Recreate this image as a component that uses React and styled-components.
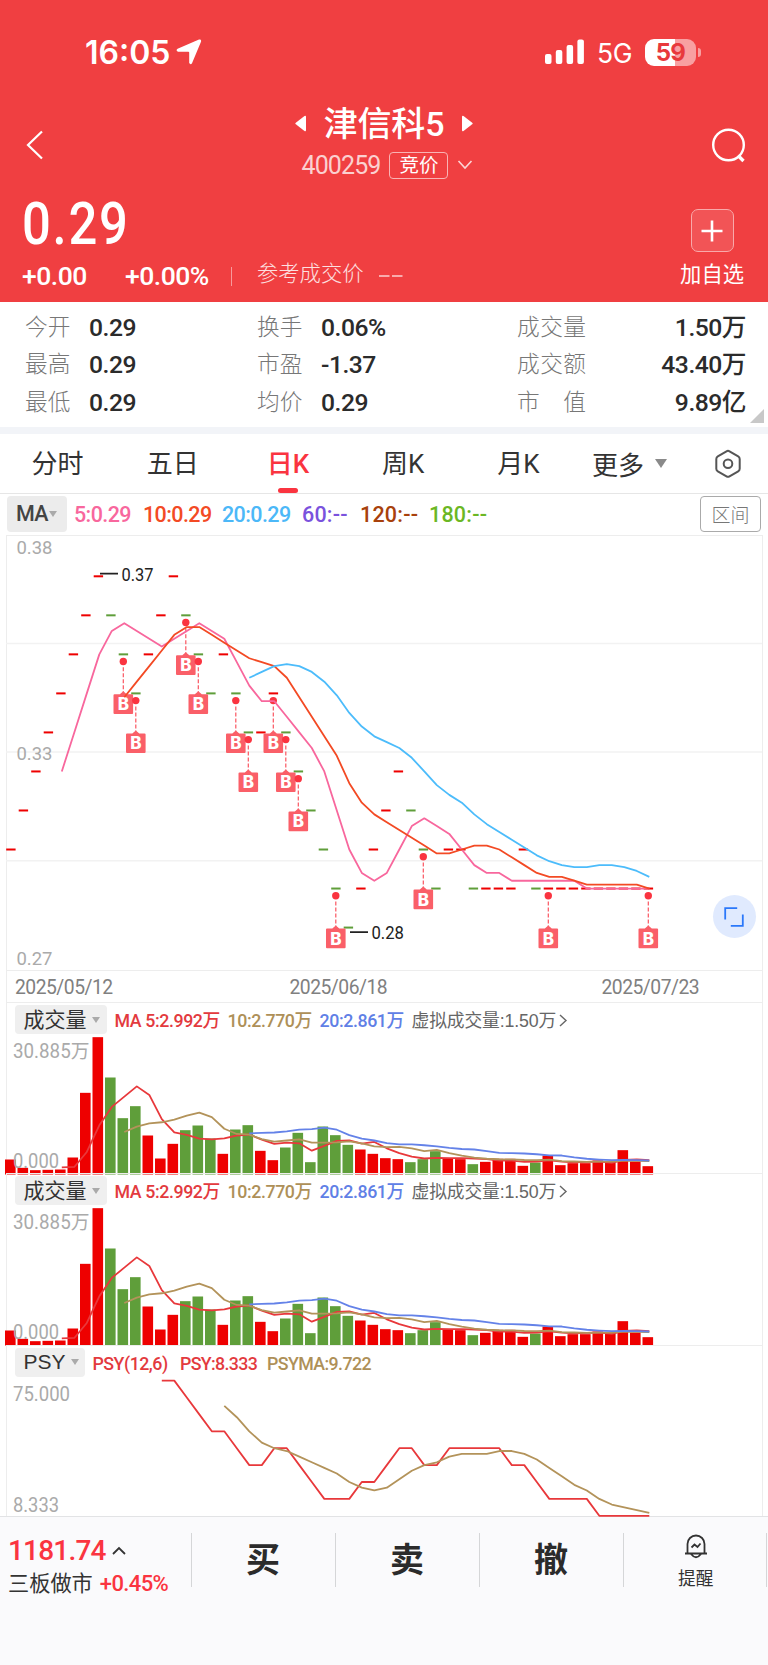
import React from 'react';
import styled, { createGlobalStyle } from 'styled-components';

const GlobalStyle = createGlobalStyle`
    * {
        box-sizing: border-box;
    }
    body {
        margin: 0;
        background: #fff;
        color: #333;
        font-family: Roboto, "Noto Sans CJK SC", sans-serif;
    }
    svg {
        display: block;
        flex: none;
    }
`;

const RED = '#ee0000';
const GREEN = '#5f9e3a';
const UP = '#fa3440';

// Layout
const Page = styled.div`
    width: 768px;
    height: 1665px;
    overflow: hidden;
    display: flex;
    flex-direction: column;
`;

const Header = styled.header`
    height: 302px;
    flex: none;
    background: #f03f41;
    color: #fff;
`;

const StatusBar = styled.div`
    height: 104px;
    padding: 0 67px 0 85px;
    display: flex;
    align-items: center;
    font-family: Inter, sans-serif;
`;

const Clock = styled.span`
    font-size: 32px;
    font-weight: 600;
    letter-spacing: 0;
    margin-right: 6px;
`;

const Network = styled.span`
    margin: 1px 13px 0 13px;
    font-size: 26.5px;
    letter-spacing: -0.5px;
`;

const Battery = styled.div`
    width: 51px;
    height: 27px;
    border-radius: 9px;
    background: linear-gradient(90deg, #fff 30px, #f8a0a1 30px);
    color: #e8393c;
    display: flex;
    align-items: center;
    justify-content: center;
    font-size: 24px;
    font-weight: 700;
    letter-spacing: -0.8px;
`;

const BatteryTip = styled.i`
    width: 3px;
    height: 9px;
    margin-left: 2px;
    border-radius: 0 4px 4px 0;
    background: #f8a0a1;
`;

const Spacer = styled.div`
    flex: 1;
`;

const NavBar = styled.div`
    height: 82px;
    padding: 0 23px 0 26px;
    display: grid;
    grid-template-columns: 34px 1fr 34px;
    align-items: center;
`;

const TitleBox = styled.div`
    display: flex;
    flex-direction: column;
    align-items: center;
`;

const TitleRow = styled.div`
    height: 40px;
    padding: 0 3px 6px 0;
    display: flex;
    align-items: center;
    gap: 18px;
    font-size: 34px;
    font-weight: 500;
    letter-spacing: -0.2px;

    > svg {
        margin-top: 4px;
    }
`;

const CodeRow = styled.div`
    height: 42px;
    padding: 1px 0 0 4px;
    display: flex;
    align-items: center;
    font-size: 25px;
    letter-spacing: -0.9px;
    color: #fbd0d0;
`;

const Tag = styled.span`
    width: 59px;
    height: 27px;
    margin: -1px 9px 0 9px;
    border: 1.5px solid #f9b3b4;
    border-radius: 4px;
    color: #fff;
    font-size: 19.5px;
    line-height: 26px;
    letter-spacing: 0;
    text-align: center;
`;

const QuoteBox = styled.div`
    height: 116px;
    padding: 0 24px 0 22px;
    display: flex;
    justify-content: space-between;
`;

const Price = styled.div`
    height: 74px;
    font-size: 59px;
    line-height: 75px;
    font-weight: 500;
    letter-spacing: 2px;
    transform: scaleX(0.86);
    transform-origin: 0 0;
`;

const ChangeRow = styled.div`
    height: 32px;
    display: flex;
    align-items: center;
    font-size: 26.5px;
    font-weight: 500;
    letter-spacing: -0.5px;
    line-height: 30px;
`;

const Change = styled.span`
    width: ${(p) => p.$w}px;
    margin-top: -1px;
`;

const RefPrice = styled.span`
    height: 19px;
    padding-left: 25px;
    border-left: 1px solid #f79a9b;
    display: flex;
    align-items: center;
    gap: 15px;
    font-size: 21.3px;
    font-weight: 300;
    letter-spacing: 0;
    color: #fde0e0;

    > span {
        margin-top: -4px;
    }
`;

const AddBox = styled.div`
    padding-top: 23px;
    display: flex;
    flex-direction: column;
    align-items: center;
    font-size: 21.3px;
    line-height: 46px;
`;

const AddButton = styled.button`
    width: 43px;
    height: 43px;
    padding: 0;
    border: 1.5px solid #f9a9aa;
    border-radius: 7px;
    background: #f25456;
    display: grid;
    place-items: center;
`;

const Stats = styled.section`
    position: relative;
    height: 125px;
    flex: none;
    padding: 7px 22px 0 25px;
    display: grid;
    grid-template-columns: 232px 260px 1fr;
    grid-auto-rows: 37.5px;
`;

const Stat = styled.div`
    display: flex;
    align-items: center;
    justify-content: ${(p) => (p.$wide ? 'space-between' : 'flex-start')};
`;

const StatLabel = styled.span`
    width: ${(p) => (p.$wide ? 69 : 64)}px;
    display: flex;
    justify-content: ${(p) => (p.$wide ? 'space-between' : 'flex-start')};
    font-size: 22.7px;
    line-height: 30px;
    color: #777;
    font-weight: 300;
`;

const StatValue = styled.span`
    font-size: 24.7px;
    line-height: 30px;
    font-weight: 500;
    letter-spacing: -0.5px;
    color: #2b2b2b;
`;

const Corner = styled.i`
    position: absolute;
    right: 4px;
    bottom: 4px;
    border-left: 14px solid transparent;
    border-bottom: 14px solid #c8c8c8;
`;

const Band = styled.div`
    height: 7px;
    flex: none;
    background: #f2f4f8;
`;

const Tabs = styled.nav`
    height: 60px;
    flex: none;
    border-bottom: 1.5px solid #e6e6e6;
    display: flex;
`;

const Tab = styled.div`
    width: 115.2px;
    padding-top: 6px;
    display: flex;
    flex-direction: column;
    align-items: center;
    font-size: 26px;
    line-height: 48px;
    color: ${(p) => (p.$active ? UP : '#333')};
    font-weight: ${(p) => (p.$active ? 500 : 400)};

    &::after {
        content: '';
        width: 20px;
        height: 5px;
        border-radius: 2.5px;
        background: ${(p) => (p.$active ? UP : 'transparent')};
    }
`;

const MoreTab = styled.div`
    width: 108px;
    padding: 1px 0 1px 16px;
    display: flex;
    align-items: center;
    gap: 11px;
    font-size: 26px;
    color: #333;
`;

const TabIcon = styled.div`
    flex: 1;
    padding: 0 0 0 5px;
    display: grid;
    place-items: center;
`;

const Triangle = styled.i`
    flex: none;
    border-left: ${(p) => p.$size / 2}px solid transparent;
    border-right: ${(p) => p.$size / 2}px solid transparent;
    border-top: ${(p) => p.$size * 0.7}px solid ${(p) => p.color};
`;

const MaRow = styled.div`
    height: 41px;
    flex: none;
    padding: 2px 7px 0 7px;
    display: flex;
    align-items: flex-start;
    font-size: 21.5px;
    line-height: 38px;
    letter-spacing: -0.75px;
`;

const MaPill = styled.div`
    width: 60px;
    height: 36px;
    margin-right: 7px;
    padding-left: 9px;
    border-radius: 4px;
    background: #ececec;
    display: flex;
    align-items: center;
    gap: 1px;
    color: #444;
    font-weight: 500;
`;

const MaItem = styled.span`
    width: ${(p) => p.$w}px;
    color: ${(p) => p.color};
    font-weight: 500;
    letter-spacing: ${(p) => (p.$empty ? 0.2 : -0.6)}px;
`;

const RangeButton = styled.button`
    width: 61px;
    height: 36px;
    margin-left: auto;
    padding: 0;
    border: 1.5px solid #aaa;
    border-radius: 4px;
    background: #fff;
    color: #777;
    font: 300 19px/32px "Noto Sans CJK SC", sans-serif;
`;

const ChartFrame = styled.section`
    position: relative;
    width: 757px;
    height: ${(p) => p.$h}px;
    flex: none;
    margin-left: 5.5px;
    border: 1px solid #ededed;
    border-bottom: 0;

    > svg {
        margin: -1px 0 0 -6.5px;
    }
`;

const FullscreenButton = styled.button`
    position: absolute;
    top: 359px;
    right: 6px;
    width: 43px;
    height: 43px;
    padding: 0;
    border: 0;
    border-radius: 50%;
    background: #e0eafe;
    display: grid;
    place-items: center;
`;

const DateRow = styled.div`
    width: 757px;
    height: 32px;
    flex: none;
    margin-left: 5.5px;
    padding: 1px 0 0 8.5px;
    border: 1px solid #ededed;
    border-bottom: 0;
    display: grid;
    grid-template-columns: 274.5px 312px 1fr;
    font-size: 19.3px;
    line-height: 31px;
    letter-spacing: -0.5px;
    color: #808080;
`;

const SubFrame = styled(ChartFrame)`
    > svg {
        margin-top: -33px;
    }
`;

const SubHeader = styled.div`
    position: relative;
    height: 32px;
    padding: 2px 0 0 8px;
    display: flex;
    font-size: 17.8px;
    line-height: 32px;
`;

const SubPill = styled.div`
    width: ${(p) => p.$w}px;
    height: 29px;
    margin-right: 8px;
    padding-left: 9px;
    border-radius: 4px;
    background: #efefef;
    display: flex;
    align-items: center;
    gap: 5px;
    font-family: "Liberation Sans", "Noto Sans CJK SC", sans-serif;
    font-size: 21px;
    line-height: 28px;
    color: #333;
`;

const SubItem = styled.span`
    width: ${(p) => p.$w}px;
    white-space: pre;
    letter-spacing: ${(p) => p.$ls || -0.4}px;
    color: ${(p) => p.color};
    font-weight: 500;
`;

const Virtual = styled.span`
    display: flex;
    align-items: center;
    gap: 3px;
    height: 31px;
    color: #666;
    font-family: "Liberation Sans", "Noto Sans CJK SC", sans-serif;
    letter-spacing: -0.15px;
`;

const BottomBar = styled.footer`
    flex: 1;
    padding-top: 16px;
    border-top: 1.5px solid #e2e3e5;
    background: #fafafc;
    display: grid;
    grid-template-columns: 191.5px 144px 144px 144px 143.5px;
    grid-template-rows: 54px;
`;

const IndexBox = styled.div`
    padding-left: 8px;
    border-right: 1px solid #d5d6d8;
    color: ${UP};
`;

const IndexValue = styled.div`
    height: 37px;
    margin-top: -1px;
    display: flex;
    align-items: center;
    gap: 6px;
    font-size: 28px;
    font-weight: 500;
    letter-spacing: -0.8px;
`;

const IndexName = styled.div`
    display: flex;
    gap: 7px;
    margin-top: -1px;
    font-size: 21.2px;
    line-height: 32px;
    white-space: nowrap;
    color: #333;
`;

const IndexChange = styled.span`
    font-size: 22px;
    font-weight: 500;
    letter-spacing: -0.6px;
    color: ${UP};
`;

const Action = styled.div`
    border-right: 1px solid #d5d6d8;
    display: grid;
    place-items: center;
    font-size: 34px;
    line-height: 54px;
    font-weight: 600;
    color: #2b2b2b;
`;

const Remind = styled.div`
    border-right: 1px solid #d5d6d8;
    padding: 1px 0 0 2px;
    display: flex;
    flex-direction: column;
    align-items: center;
    font-size: 17.7px;
    line-height: 41px;
    color: #333;
`;

// Daily data: closing price in cents and volume
const closes = [
    30, 31, 32, 33, 34, 35, 36, 37, 36, 35, 34, 35, 36, 37, 36, 35, 34, 35, 34, 33, 33, 34, 33, 32, 31, 30,
    29, 28, 29, 30, 31, 32, 31, 30, 29, 30, 30, 29, 29, 29, 29, 30, 29, 29, 29, 29, 29, 29, 29, 29, 29, 29,
];
const volumes = [
    45, 20, 13, 14, 15, 51, 245, 412, 291, 169, 205, 117, 48, 92, 133, 147, 108, 62, 135, 148, 71, 43, 81,
    125, 37, 144, 118, 89, 75, 62, 49, 46, 37, 46, 70, 47, 46, 31, 38, 47, 47, 26, 36, 57, 28, 34, 34, 42,
    37, 73, 39, 25,
];
const psy = [
    9, 9, 8, 7, 6, 6, 5, 4, 4, 5, 5, 4, 3, 2, 2, 2, 3, 3, 4, 5, 5, 4, 4, 5, 5, 5, 5, 5, 4, 4, 3, 2, 2, 2, 2,
    1, 1, 1, 1, 1,
];
const greens = [8, 9, 10, 14, 15, 16, 18, 19, 22, 23, 24, 25, 26, 27, 32, 33, 34, 37, 42];
const marks = [9, 10, 14, 15, 18, 19, 21, 22, 23, 26, 33, 43, 51];

const STEP = 12.5;
const colorOf = (i) => (greens.includes(i) ? GREEN : RED);
const priceY = (v) => 41.3 + (37 - v) * 39.03;
const volumeY = (v) => 172.5 - v / 3;
const psyY = (v) => 35.6 + (9 - v) * 16.9;

const average = (data, n) =>
    data.slice(n - 1).map((_, i) => data.slice(i, i + n).reduce((a, b) => a + b, 0) / n);

const Line = ({ data, start, y, color }) => (
    <polyline
        points={data.map((v, i) => `${11.8 + (start + i) * STEP},${y(v).toFixed(2)}`).join(' ')}
        fill="none"
        stroke={color}
        strokeWidth="1.8"
        strokeLinejoin="round"
    />
);

const MaLine = ({ data, n, y, color }) => <Line data={average(data, n)} start={n - 1} y={y} color={color} />;

const AxisText = ({ x = 13, y, w, size = 19.5, color = '#aaa', children }) => (
    <text x={x} y={y} fontSize={size} fill={color} textLength={w} lengthAdjust="spacingAndGlyphs">
        {children}
    </text>
);

const BuyMark = ({ i }) => {
    const x = 10.8 + i * STEP;
    const y = priceY(closes[i]);
    return (
        <g>
            <circle cx={x} cy={y + 7.2} r="3.7" fill="#fa3440" />
            <path d={`M${x} ${y + 13}V${y + 38}`} stroke="#fa5560" strokeWidth="1.2" strokeDasharray="4 2" />
            <path
                d={`M${x - 9.8} ${y + 41}q0-1 1-1h5.3l3.5-3 3.5 3h5.3q1 0 1 1v17.7q0 1-1 1h-17.6q-1 0-1-1z`}
                fill="#fa5f68"
            />
            <text x={x} y={y + 56} textAnchor="middle" fontSize="17" fontWeight="800" fill="#fff" fontFamily="Inter">
                B
            </text>
        </g>
    );
};

const PriceChart = () => (
    <svg width="768" height="435">
        {[108.5, 217, 325.7].map((y) => (
            <path key={y} d={`M6 ${y}H762`} stroke="#f2f2f2" strokeWidth="1.5" />
        ))}
        <AxisText x={16.5} y={19} w={36} size={18.5}>0.38</AxisText>
        <AxisText x={16.5} y={224.5} w={36} size={18.5}>0.33</AxisText>
        <AxisText x={16.5} y={429.5} w={36} size={18.5}>0.27</AxisText>
        {closes.map((v, i) => (
            <rect key={i} x={6.2 + i * STEP} y={priceY(v) - 1} width="9.4" height="2" fill={colorOf(i)} />
        ))}
        {marks.map((i) => (
            <BuyMark key={i} i={i} />
        ))}
        <MaLine data={closes} n={5} y={priceY} color="#f8679d" />
        <MaLine data={closes} n={10} y={priceY} color="#f34a24" />
        <MaLine data={closes} n={20} y={priceY} color="#4cbcfb" />
        <path d="M100 38.7h18M350 397.2h18" stroke="#222" strokeWidth="1.7" />
        <AxisText x={121.5} y={45.5} w={32} size={18} color="#222">0.37</AxisText>
        <AxisText x={371.5} y={404} w={32.5} size={18} color="#222">0.28</AxisText>
    </svg>
);

const VolumePanel = () => (
    <SubFrame $h={171.4}>
        <SubHeader>
            <SubPill $w={92}>
                成交量
                <Triangle $size={9} color="#aaa" />
            </SubPill>
            <SubItem $w={113} color="#e33a3e">MA 5:2.992万</SubItem>
            <SubItem $w={92} color="#ae9058">10:2.770万</SubItem>
            <SubItem $w={92} color="#5f80e6">20:2.861万</SubItem>
            <Virtual>
                虚拟成交量:1.50万
                <svg width="9" height="13" fill="none" stroke="#666" strokeWidth="1.4">
                    <path d="M1 1l6 5.5-6 5.5" />
                </svg>
            </Virtual>
        </SubHeader>
        <svg width="768" height="172.5">
            {volumes.map((v, i) => (
                <rect key={i} x={5 + i * STEP} y={volumeY(v)} width="10.6" height={v / 3} fill={colorOf(i)} />
            ))}
            <MaLine data={volumes} n={5} y={volumeY} color="#e8383b" />
            <MaLine data={volumes} n={10} y={volumeY} color="#b3935a" />
            <MaLine data={volumes} n={20} y={volumeY} color="#6482e8" />
            <AxisText y={56.3} w={76.5}>30.885万</AxisText>
            <AxisText y={166.4} w={46}>0.000</AxisText>
        </svg>
    </SubFrame>
);

const PsyPanel = () => (
    <SubFrame $h={171.5}>
        <SubHeader>
            <SubPill $w={70}>
                PSY
                <Triangle $size={9} color="#aaa" />
            </SubPill>
            <SubItem $w={87.5} $ls={-0.5} color="#e33a3e">PSY(12,6)</SubItem>
            <SubItem $w={87} $ls={-0.65} color="#e33a3e">PSY:8.333</SubItem>
            <SubItem $w={110} $ls={-0.6} color="#ae9058">PSYMA:9.722</SubItem>
        </SubHeader>
        <svg width="768" height="172">
            <Line data={psy} start={12} y={psyY} color="#e8383b" />
            <Line data={average(psy, 6)} start={17} y={psyY} color="#b3935a" />
            <AxisText y={56.2} w={57}>75.000</AxisText>
            <AxisText y={166.5} w={46}>8.333</AxisText>
        </svg>
    </SubFrame>
);

const stats = [
    ['今开', '0.29'], ['换手', '0.06%'], ['成交量', '1.50万'],
    ['最高', '0.29'], ['市盈', '-1.37'], ['成交额', '43.40万'],
    ['最低', '0.29'], ['均价', '0.29'], ['市值', '9.89亿'],
];

const maItems = [
    ['5:0.29', '#f8679d', 69], ['10:0.29', '#f34a24', 79], ['20:0.29', '#4cb8f8', 80],
    ['60:--', '#7a52dd', 58], ['120:--', '#a8410c', 69], ['180:--', '#6bb724', 60],
];

const App = () => (
    <Page>
        <GlobalStyle />
        <Header>
            <StatusBar>
                <Clock>16:05</Clock>
                <svg width="26" height="26" fill="#fff">
                    <path d="M23 0.6Q25.6 0 25 2.8L16 24.2Q14.6 26.2 13.2 24V13.5Q13.2 12.7 12.4 12.7H2Q-.6 11.5 1.6 9.8z" />
                </svg>
                <Spacer />
                <svg width="39" height="26" fill="#fff">
                    <rect x="0" y="15" width="6.5" height="10" rx="2" />
                    <rect x="10.8" y="11" width="6.5" height="14" rx="2" />
                    <rect x="21.6" y="6" width="6.5" height="19" rx="2" />
                    <rect x="32.4" y="0.5" width="6.5" height="24.5" rx="2" />
                </svg>
                <Network>5G</Network>
                <Battery>59</Battery>
                <BatteryTip />
            </StatusBar>
            <NavBar>
                <svg width="18" height="30" fill="none" stroke="#fff" strokeWidth="2.2">
                    <path d="M16 1.5L2 15l14 13.5" />
                </svg>
                <TitleBox>
                    <TitleRow>
                        <svg width="11" height="17" fill="#fff">
                            <path d="M9.5 1Q11 0 11 2v13q0 2-1.5 1L.8 9.3Q-.2 8.5.8 7.7z" />
                        </svg>
                        津信科5
                        <svg width="11" height="17" fill="#fff">
                            <path d="M1.5 1Q0 0 0 2v13q0 2 1.5 1l8.7-6.7q1-.8 0-1.6z" />
                        </svg>
                    </TitleRow>
                    <CodeRow>
                        400259
                        <Tag>竞价</Tag>
                        <svg width="16" height="11" fill="none" stroke="#fcd5d5" strokeWidth="1.6">
                            <path d="M1.5 1l6.5 7 6.5-7" />
                        </svg>
                    </CodeRow>
                </TitleBox>
                <svg width="35" height="36" fill="none" stroke="#fff" strokeWidth="2.4">
                    <circle cx="17.5" cy="18" r="15.3" />
                    <path d="M27 28.5l5.5 5.5" strokeWidth="3.4" />
                </svg>
            </NavBar>
            <QuoteBox>
                <div>
                    <Price>0.29</Price>
                    <ChangeRow>
                        <Change $w={103}>+0.00</Change>
                        <Change $w={106}>+0.00%</Change>
                        <RefPrice>
                            <span>参考成交价</span>
                            <svg width="24" height="4" stroke="#fccfcf" strokeWidth="1.5">
                                <path d="M0 2h10.5M13 2h10.5" />
                            </svg>
                        </RefPrice>
                    </ChangeRow>
                </div>
                <AddBox>
                    <AddButton>
                        <svg width="22" height="22" stroke="#fff" strokeWidth="2.6">
                            <path d="M11 0.5v21M0.5 11h21" />
                        </svg>
                    </AddButton>
                    加自选
                </AddBox>
            </QuoteBox>
        </Header>

        <Stats>
            {stats.map(([label, value], i) => (
                <Stat key={label} $wide={i % 3 === 2}>
                    <StatLabel $wide={i % 3 === 2}>
                        {label.split('').map((c) => (
                            <span key={c}>{c}</span>
                        ))}
                    </StatLabel>
                    <StatValue>{value}</StatValue>
                </Stat>
            ))}
            <Corner />
        </Stats>
        <Band />

        <Tabs>
            {['分时', '五日', '日K', '周K', '月K'].map((name) => (
                <Tab key={name} $active={name === '日K'}>
                    {name}
                </Tab>
            ))}
            <MoreTab>
                更多
                <Triangle $size={13} color="#8a8a8a" />
            </MoreTab>
            <TabIcon>
                <svg width="28" height="30" fill="none" stroke="#555" strokeWidth="2">
                    <path d="M12.5 2.3q1.5-.9 3 0l8.7 5q1.5.9 1.5 2.6v9.8q0 1.7-1.5 2.6l-8.7 5q-1.5.9-3 0l-8.7-5q-1.5-.9-1.5-2.6V9.9q0-1.7 1.5-2.6z" />
                    <circle cx="14" cy="14.8" r="4.3" />
                </svg>
            </TabIcon>
        </Tabs>

        <MaRow>
            <MaPill>
                MA
                <Triangle $size={9} color="#aaa" />
            </MaPill>
            {maItems.map(([text, color, w]) => (
                <MaItem key={text} color={color} $w={w} $empty={text.endsWith('--')}>
                    {text}
                </MaItem>
            ))}
            <RangeButton>区间</RangeButton>
        </MaRow>

        <ChartFrame $h={435}>
            <PriceChart />
            <FullscreenButton>
                <svg width="20" height="20" fill="none" stroke="#2b78fa" strokeWidth="1.8">
                    <path d="M1.2 12.5V1.2h12M18.8 7.5v11.3h-12" />
                </svg>
            </FullscreenButton>
        </ChartFrame>
        <DateRow>
            <span>2025/05/12</span>
            <span>2025/06/18</span>
            <span>2025/07/23</span>
        </DateRow>

        <VolumePanel />
        <VolumePanel />
        <PsyPanel />

        <BottomBar>
            <IndexBox>
                <IndexValue>
                    1181.74
                    <svg width="14" height="9" fill="none" stroke="#333" strokeWidth="1.8">
                        <path d="M1 8l6-6 6 6" />
                    </svg>
                </IndexValue>
                <IndexName>
                    三板做市
                    <IndexChange>+0.45%</IndexChange>
                </IndexName>
            </IndexBox>
            <Action>买</Action>
            <Action>卖</Action>
            <Action>撤</Action>
            <Remind>
                <svg width="24" height="25" fill="none" stroke="#333" strokeWidth="1.8">
                    <path d="M1 19.5h22M3.5 19.5V10a8.5 8.5 0 0 1 17 0v9.5M7 20q5 6.5 10 0M7.5 13.5l3-3 3 2.5 3-3.5" />
                </svg>
                提醒
            </Remind>
        </BottomBar>
    </Page>
);

export default App;
